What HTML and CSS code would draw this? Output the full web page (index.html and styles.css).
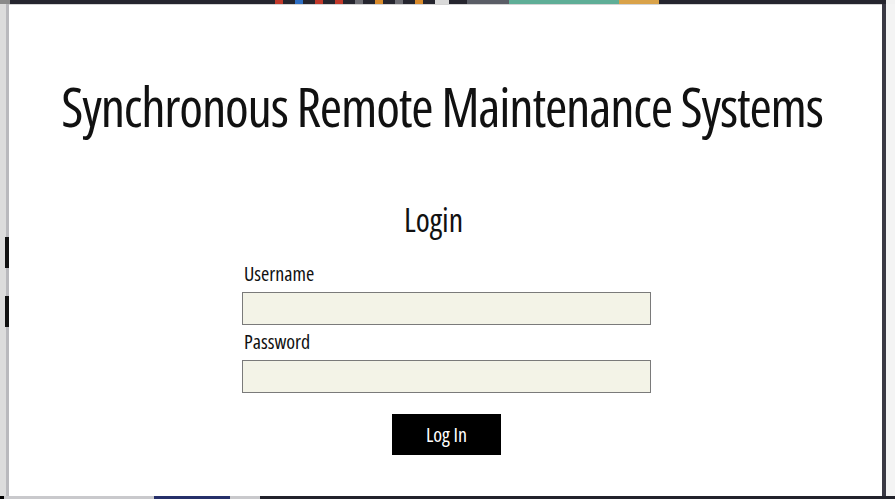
FILE: index.html
```html
<!DOCTYPE html>
<html lang="en">
<head>
<meta charset="utf-8">
<title>Login - Synchronous Remote Maintenance Systems</title>
<link rel="stylesheet" href="styles.css">
</head>
<body>
<div class="screen">
  <div class="tabstrip">
    <span class="tab tab-grey" style="width:10px"></span>
    <span class="tab-gap" style="width:265px"></span>
    <span class="fav fav-red"></span>
    <span class="fav fav-blue"></span>
    <span class="fav fav-red"></span>
    <span class="fav fav-red"></span>
    <span class="fav fav-grey"></span>
    <span class="fav fav-orange"></span>
    <span class="fav fav-grey"></span>
    <span class="fav fav-orange"></span>
    <span class="fav fav-white"></span>
    <span class="tab tab-slate" style="width:42px"></span>
    <span class="tab tab-teal" style="width:110px"></span>
    <span class="tab tab-amber" style="width:40px"></span>
  </div>
  <div class="middle">
    <div class="gutter-left"><span class="mark" style="margin-top:233px"></span><span class="mark" style="margin-top:28px"></span></div>
    <main class="panel">
      <h1 class="title">Synchronous Remote Maintenance Systems</h1>
      <form class="login" action="#" method="post">
        <h2 class="login-heading">Login</h2>
        <label class="field-label" for="username">Username</label>
        <input class="field" id="username" name="username" type="text">
        <label class="field-label field-label--second" for="password">Password</label>
        <input class="field" id="password" name="password" type="password">
        <button class="submit" type="submit">Log In</button>
      </form>
    </main>
    <div class="frame-right"></div>
    <div class="gutter-right"></div>
  </div>
  <div class="taskbar">
    <span class="seg seg-black" style="width:4px"></span>
    <span class="seg seg-light" style="width:150px"></span>
    <span class="seg seg-navy" style="width:76px"></span>
    <span class="seg seg-light" style="width:30px"></span>
    <span class="seg seg-dark"></span>
  </div>
</div>
</body>
</html>
```
FILE: styles.css
```css
* { box-sizing: border-box; }

html, body {
  margin: 0;
  padding: 0;
  background: #f2f2f2;
}

.screen {
  width: 895px;
  height: 499px;
  display: flex;
  flex-direction: column;
  overflow: hidden;
}

/* browser tab strip along the top edge */
.tabstrip {
  height: 4px;
  flex: 0 0 4px;
  display: flex;
  align-items: stretch;
  background: #25252e;
  width: 886px;
}
.tab { display: block; }
.tab-gap { display: block; }
.tab-grey { background: #8a8a8a; }
.tab-slate { background: #5a5d66; margin-left: 6px; }
.tab-teal { background: #5fae97; }
.tab-amber { background: #d9a249; }
.fav { display: block; width: 8px; margin-right: 12px; }
.fav-red { background: #c0392b; }
.fav-blue { background: #2e6fc4; }
.fav-grey { background: #6e6e74; }
.fav-orange { background: #d88a2c; }
.fav-white { background: #d9d9d9; width: 14px; }

.middle {
  flex: 1;
  display: flex;
  min-height: 0;
}

.gutter-left {
  width: 9px;
  flex: 0 0 9px;
  background: #dcdcdc;
  border-right: 3px solid #b9b9bd;
  display: flex;
  flex-direction: column;
}
.mark {
  display: block;
  width: 4px;
  height: 31px;
  background: #111;
  margin-left: 5px;
}

/* the white login window */
.panel {
  flex: 1;
  min-width: 0;
  overflow: hidden;
  background: #ffffff;
  border-top: 1px solid #d4d4d4;
  padding-top: 74px;
  padding-left: 2px;
  font-family: "Open Sans", "DejaVu Sans Condensed", sans-serif;
  font-stretch: 75%;
  color: #111;
}

.frame-right {
  width: 4px;
  flex: 0 0 4px;
  background: #3a3944;
}
.gutter-right {
  width: 9px;
  flex: 0 0 9px;
  background: #f4f4f4;
}

.title {
  margin: 0;
  padding-right: 9px;
  font-size: 54px;
  line-height: 54px;
  font-weight: normal;
  letter-spacing: -1.2px;
  text-align: center;
  white-space: nowrap;
}

.login {
  width: 409px;
  margin: 71px auto 0;
  display: flex;
  flex-direction: column;
}

.login-heading {
  margin: 0 26px 0 0;
  font-size: 32px;
  line-height: 32px;
  font-weight: normal;
  text-align: center;
}

.field-label {
  margin: 28px 0 0 2px;
  font-size: 20px;
  line-height: 20px;
}
.field-label--second { margin-top: 7px; }

.field {
  margin-top: 8px;
  height: 33px;
  width: 409px;
  background: #f3f3e7;
  border: 1px solid #7a7a7a;
  padding: 0 6px;
  font: inherit;
  outline: none;
}

.submit {
  align-self: center;
  margin-top: 21px;
  width: 109px;
  height: 41px;
  background: #000;
  color: #fff;
  border: none;
  font-family: inherit;
  font-stretch: inherit;
  font-size: 20px;
  line-height: 20px;
  padding: 0;
  cursor: pointer;
}

/* taskbar along the bottom edge */
.taskbar {
  height: 3px;
  flex: 0 0 3px;
  display: flex;
}
.seg { display: block; }
.seg-black { background: #000; }
.seg-light { background: #c9c9cc; }
.seg-navy { background: #26306a; }
.seg-dark { flex: 1; background: #22222b; }
```
